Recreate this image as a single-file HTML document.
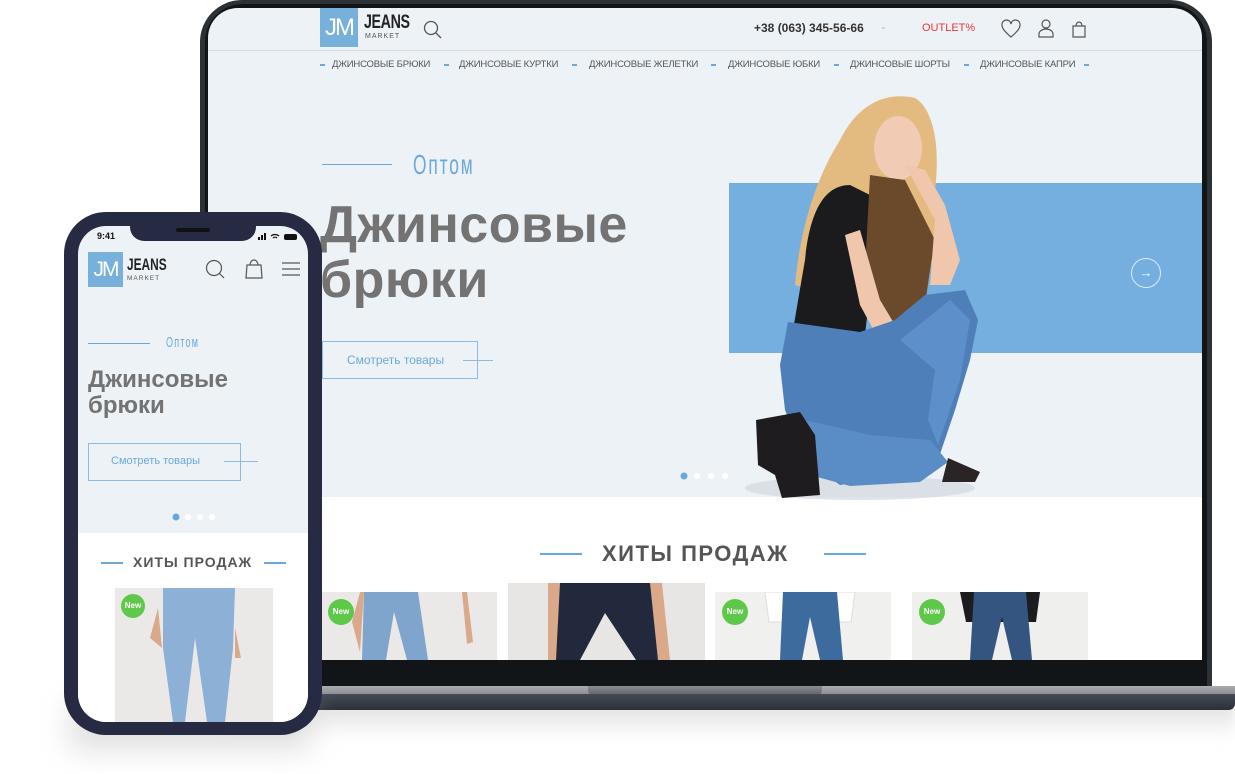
<!DOCTYPE html>
<html><head><meta charset="utf-8"><style>
*{margin:0;padding:0;box-sizing:border-box}
body{width:1235px;height:774px;background:#fff;position:relative;overflow:hidden;font-family:"Liberation Sans",sans-serif}
.a{position:absolute}
.cond{font-family:"Liberation Sans Narrow","Liberation Sans",sans-serif}
.nav span{position:absolute;top:59px;font-size:9.5px;color:#555;white-space:nowrap;letter-spacing:-0.2px}
.nav i{position:absolute;top:64px;width:5px;height:1.5px;background:#6aa8db}
.new{position:absolute;width:26px;height:26px;border-radius:50%;background:#5ec84a;color:#fff;font-size:8px;font-weight:bold;text-align:center;line-height:26px}
</style></head><body>

<div class="a" style="left:230px;top:700px;width:1005px;height:40px;background:linear-gradient(#ddd,rgba(255,255,255,0));filter:blur(6px)"></div>
<div class="a" style="left:200px;top:0;width:1012px;height:692px;background:#2c3136;border-radius:42px 42px 0 0"></div>
<div class="a" style="left:205px;top:4px;width:1002px;height:688px;background:#111518;border-radius:38px 38px 0 0"></div>
<div class="a" style="left:208px;top:8px;width:994px;height:652px;background:#edf2f6;border-radius:30px 30px 0 0;overflow:hidden">
  <div class="a" style="left:0;top:489px;width:994px;height:170px;background:#fff"></div>
  <div class="a" style="left:0;top:42px;width:994px;height:1px;background:#d8dde2"></div>
  <div class="a" style="left:521px;top:175px;width:473px;height:170px;background:#74afdf"></div>
</div>
<div class="a" style="left:208px;top:686px;width:1027px;height:8px;background:linear-gradient(#a9abae,#8d8f93)"></div>
<div class="a" style="left:588px;top:686px;width:234px;height:10px;background:linear-gradient(#8a8c90,#5d6066);border-radius:0 0 6px 6px"></div>
<div class="a" style="left:208px;top:694px;width:1027px;height:16px;background:linear-gradient(#454b55,#2a2f38);border-radius:0 0 8px 20px"></div>

<div class="a" style="left:320px;top:8px;width:38px;height:39px;background:#78b0dc;color:#fff;font-size:24px;line-height:39px;text-align:center;letter-spacing:-2px;font-family:'Liberation Sans Narrow',sans-serif">JM</div>
<div class="a cond" style="left:364px;top:12px;font-size:19px;font-weight:bold;color:#222;transform:scaleX(.75);transform-origin:left;letter-spacing:-0.5px">JEANS</div>
<div class="a" style="left:365px;top:33px;font-size:7px;color:#555;letter-spacing:1px">MARKET</div>
<svg class="a" style="left:423px;top:20px" width="20" height="20"><circle cx="8" cy="8" r="6.5" fill="none" stroke="#555" stroke-width="1.3"/><path d="M13 13l5 5" stroke="#555" stroke-width="1.3"/></svg>
<div class="a" style="left:754px;top:21px;font-size:12px;font-weight:bold;color:#333">+38 (063) 345-56-66</div>
<div class="a" style="left:880px;top:22px;font-size:8px;color:#9bc">⌄</div>
<div class="a" style="left:922px;top:22px;font-size:11px;color:#e8353a">OUTLET%</div>
<svg class="a" style="left:1000px;top:18px" width="96" height="22"><path d="M11 19C4 13 2 10 2 7a4.5 4.5 0 0 1 9-1 4.5 4.5 0 0 1 9 1c0 3-2 6-9 12z" fill="none" stroke="#555" stroke-width="1.2"/><circle cx="46" cy="6" r="4" fill="none" stroke="#555" stroke-width="1.2"/><path d="M39 19v-3a7 5 0 0 1 14 0v3z" fill="none" stroke="#555" stroke-width="1.2"/><path d="M73 8h12v11H73z M76 8a3 4 0 0 1 6 0" fill="none" stroke="#555" stroke-width="1.2"/></svg>
<div class="nav">
<i style="left:320px"></i><span style="left:332px">ДЖИНСОВЫЕ БРЮКИ</span>
<i style="left:444px"></i><span style="left:459px">ДЖИНСОВЫЕ КУРТКИ</span>
<i style="left:572px"></i><span style="left:589px">ДЖИНСОВЫЕ ЖЕЛЕТКИ</span>
<i style="left:711px"></i><span style="left:728px">ДЖИНСОВЫЕ ЮБКИ</span>
<i style="left:834px"></i><span style="left:850px">ДЖИНСОВЫЕ ШОРТЫ</span>
<i style="left:964px"></i><span style="left:980px">ДЖИНСОВЫЕ КАПРИ</span>
<i style="left:1084px"></i>
</div>

<div class="a" style="left:322px;top:164px;width:70px;height:1px;background:#6aa8db"></div>
<div class="a cond" style="left:413px;top:149px;font-size:28px;color:#6aa8db;transform:scaleX(.62);transform-origin:left;letter-spacing:3px">Оптом</div>
<div class="a" style="left:320px;top:198px;font-size:52px;line-height:55px;font-weight:bold;color:#737373;letter-spacing:0.5px">Джинсовые<br>брюки</div>
<div class="a" style="left:322px;top:341px;width:156px;height:38px;border:1px solid #8bbbe3"></div>
<div class="a" style="left:463px;top:360px;width:30px;height:1px;background:#8bbbe3"></div>
<div class="a" style="left:347px;top:353px;font-size:12px;color:#6aa8db">Смотреть товары</div>
<div class="a" style="left:1131px;top:258px;width:30px;height:30px;border:1px solid #dcebf7;border-radius:50%;color:#fff;text-align:center;line-height:28px;font-size:13px">→</div>
<svg class="a" style="left:678px;top:471px" width="52" height="10"><circle cx="6" cy="5" r="3.5" fill="#6aa8db"/><circle cx="19" cy="5" r="3" fill="#fff"/><circle cx="33" cy="5" r="3" fill="#fff"/><circle cx="47" cy="5" r="3" fill="#fff"/></svg>

<!-- woman -->
<svg class="a" style="left:720px;top:90px" width="300" height="410">
<ellipse cx="140" cy="398" rx="115" ry="12" fill="#d3d9df" opacity=".7"/>
<path d="M75 195C80 140 95 90 120 50 140 10 170 2 195 8 215 20 220 60 215 100 225 130 230 160 215 175L160 170 110 150 90 200z" fill="#e3bb80"/>
<ellipse cx="178" cy="58" rx="24" ry="32" fill="#f1cbb3"/>
<path d="M130 95C105 95 90 120 85 170 78 210 75 230 72 245L145 245 160 110z" fill="#1b1b1e"/>
<path d="M150 85L185 90 215 150 210 180 200 250 185 265 160 245 145 180z" fill="#6b4a2c"/>
<path d="M185 75L205 80 225 115 240 170 230 195 210 195 215 130z" fill="#f0c6ad"/>
<path d="M125 145L140 140 160 210 190 260 215 300 212 318 195 310 170 270 140 215z" fill="#f0c6ad"/>
<path d="M68 232L140 242 175 230 205 205 245 200 258 230 250 270 235 320 218 370 190 382 120 395 85 370 65 320 60 275z" fill="#4f7fb8"/>
<path d="M180 250L230 210 250 230 240 290 218 355 208 330 215 280z" fill="#5d8fca"/>
<path d="M85 330L150 345 210 350 228 372 200 392 130 396 90 385z" fill="#5a8cc6"/>
<path d="M36 330L80 322 95 345 100 405 62 408 55 385 38 375z" fill="#1e1c1f"/>
<path d="M228 368L260 382 255 392 222 392z" fill="#2a2426"/>
</svg>

<div class="a" style="left:540px;top:553px;width:42px;height:1.5px;background:#6aa8db"></div>
<div class="a" style="left:824px;top:553px;width:42px;height:1.5px;background:#6aa8db"></div>
<div class="a" style="left:602px;top:541px;font-size:22px;font-weight:bold;color:#555;letter-spacing:1.5px">ХИТЫ ПРОДАЖ</div>

<div class="a" style="left:322px;top:592px;width:175px;height:68px;background:#ebe9e8;overflow:hidden"><svg width="175" height="68"><path d="M30 30l8-30h4l-4 60zM140 0h5l6 50-6 2z" fill="#d9a98a"/><path d="M42 0h54l10 68H85L72 20 64 68H40z" fill="#7fa5cc"/></svg></div>
<div class="a" style="left:508px;top:583px;width:197px;height:77px;background:#e8e6e4;overflow:hidden"><svg width="197" height="77"><path d="M40 0h14l-4 77H40zM140 0h14l8 77h-12z" fill="#d9a98a"/><path d="M52 0h90l8 77H128L97 30 72 77H48z" fill="#23293d"/></svg></div>
<div class="a" style="left:715px;top:592px;width:176px;height:68px;background:#f0f0ee;overflow:hidden"><svg width="176" height="68"><path d="M50 0h20v30H54zM120 0h20l-4 30h-16z" fill="#fff" stroke="#ddd"/><path d="M68 0h54l6 68H105L95 25 87 68H65z" fill="#3e6b9e"/></svg></div>
<div class="a" style="left:912px;top:592px;width:176px;height:68px;background:#efefed;overflow:hidden"><svg width="176" height="68"><path d="M48 0h80l-4 30H54z" fill="#1c1c1e"/><path d="M62 0h52l6 68H100L90 25 80 68H58z" fill="#34557f"/></svg></div>
<div class="new" style="left:328px;top:599px">New</div>
<div class="new" style="left:722px;top:599px">New</div>
<div class="new" style="left:919px;top:599px">New</div>

<div class="a" style="left:70px;top:700px;width:240px;height:50px;background:#ccc;filter:blur(14px);opacity:.6"></div>
<div class="a" style="left:64px;top:212px;width:258px;height:523px;background:#262a43;border-radius:42px"></div>
<div class="a" style="left:78px;top:226px;width:230px;height:496px;background:#edf2f6;border-radius:28px;overflow:hidden">
  <div class="a" style="left:0;top:307px;width:230px;height:200px;background:#fff"></div>
</div>
<div class="a" style="left:130px;top:224px;width:126px;height:17px;background:#262a43;border-radius:0 0 14px 14px"></div>
<div class="a" style="left:176px;top:228px;width:34px;height:4px;background:#111;border-radius:2px"></div>
<div class="a" style="left:97px;top:231px;font-size:9px;font-weight:bold;color:#111">9:41</div>
<svg class="a" style="left:258px;top:232px" width="42" height="10"><rect x="0" y="5" width="2" height="3" fill="#111"/><rect x="3" y="3" width="2" height="5" fill="#111"/><rect x="6" y="1" width="2" height="7" fill="#111"/><path d="M13 4a6 6 0 0 1 8 0M15 6a3 3 0 0 1 4 0" stroke="#111" fill="none" stroke-width="1.3"/><rect x="26" y="2" width="13" height="6" rx="2" fill="#111"/></svg>
<div class="a" style="left:88px;top:252px;width:35px;height:35px;background:#78b0dc;color:#fff;font-size:21px;line-height:35px;text-align:center;letter-spacing:-2px">JM</div>
<div class="a" style="left:127px;top:255px;font-size:17px;font-weight:bold;color:#222;transform:scaleX(.7);transform-origin:left">JEANS</div>
<div class="a" style="left:127px;top:275px;font-size:6.5px;color:#555;letter-spacing:1px">MARKET</div>
<svg class="a" style="left:204px;top:258px" width="100" height="22"><circle cx="10" cy="10" r="7.5" fill="none" stroke="#555" stroke-width="1.2"/><path d="M15 15l5 5" stroke="#555" stroke-width="1.2"/><path d="M43 7h14l1 13H42z M46 7a4 5 0 0 1 8 0" fill="none" stroke="#555" stroke-width="1.2"/><path d="M78 5h18M78 11h18M78 17h18" stroke="#555" stroke-width="1.3"/></svg>
<div class="a" style="left:88px;top:343px;width:62px;height:1px;background:#6aa8db"></div>
<div class="a cond" style="left:166px;top:334px;font-size:15px;color:#6aa8db;transform:scaleX(.6);transform-origin:left;letter-spacing:2px">Оптом</div>
<div class="a" style="left:88px;top:367px;font-size:24px;line-height:26px;font-weight:bold;color:#737373">Джинсовые<br>брюки</div>
<div class="a" style="left:88px;top:443px;width:153px;height:38px;border:1px solid #8bbbe3"></div>
<div class="a" style="left:224px;top:461px;width:34px;height:1px;background:#8bbbe3"></div>
<div class="a" style="left:111px;top:455px;font-size:11px;color:#6aa8db">Смотреть товары</div>
<svg class="a" style="left:170px;top:512px" width="50" height="10"><circle cx="6" cy="5" r="3.5" fill="#6aa8db"/><circle cx="18" cy="5" r="3" fill="#fff"/><circle cx="30" cy="5" r="3" fill="#fff"/><circle cx="42" cy="5" r="3" fill="#fff"/></svg>
<div class="a" style="left:101px;top:562px;width:22px;height:1.5px;background:#6aa8db"></div>
<div class="a" style="left:264px;top:562px;width:22px;height:1.5px;background:#6aa8db"></div>
<div class="a" style="left:133px;top:554px;font-size:14px;font-weight:bold;color:#555;letter-spacing:1px">ХИТЫ ПРОДАЖ</div>
<div class="a" style="left:115px;top:588px;width:158px;height:134px;background:#ebe9e8;overflow:hidden"><svg width="158" height="134"><path d="M35 50l8 -30 4 40zM120 40l6 30-6 0z" fill="#d9a98a"/><path d="M48 0h72l-2 60-8 74H92L80 50 70 134H58L48 60z" fill="#8db0d6"/></svg></div>
<div class="new" style="left:121px;top:594px;width:24px;height:24px;line-height:24px">New</div>
</body></html>
